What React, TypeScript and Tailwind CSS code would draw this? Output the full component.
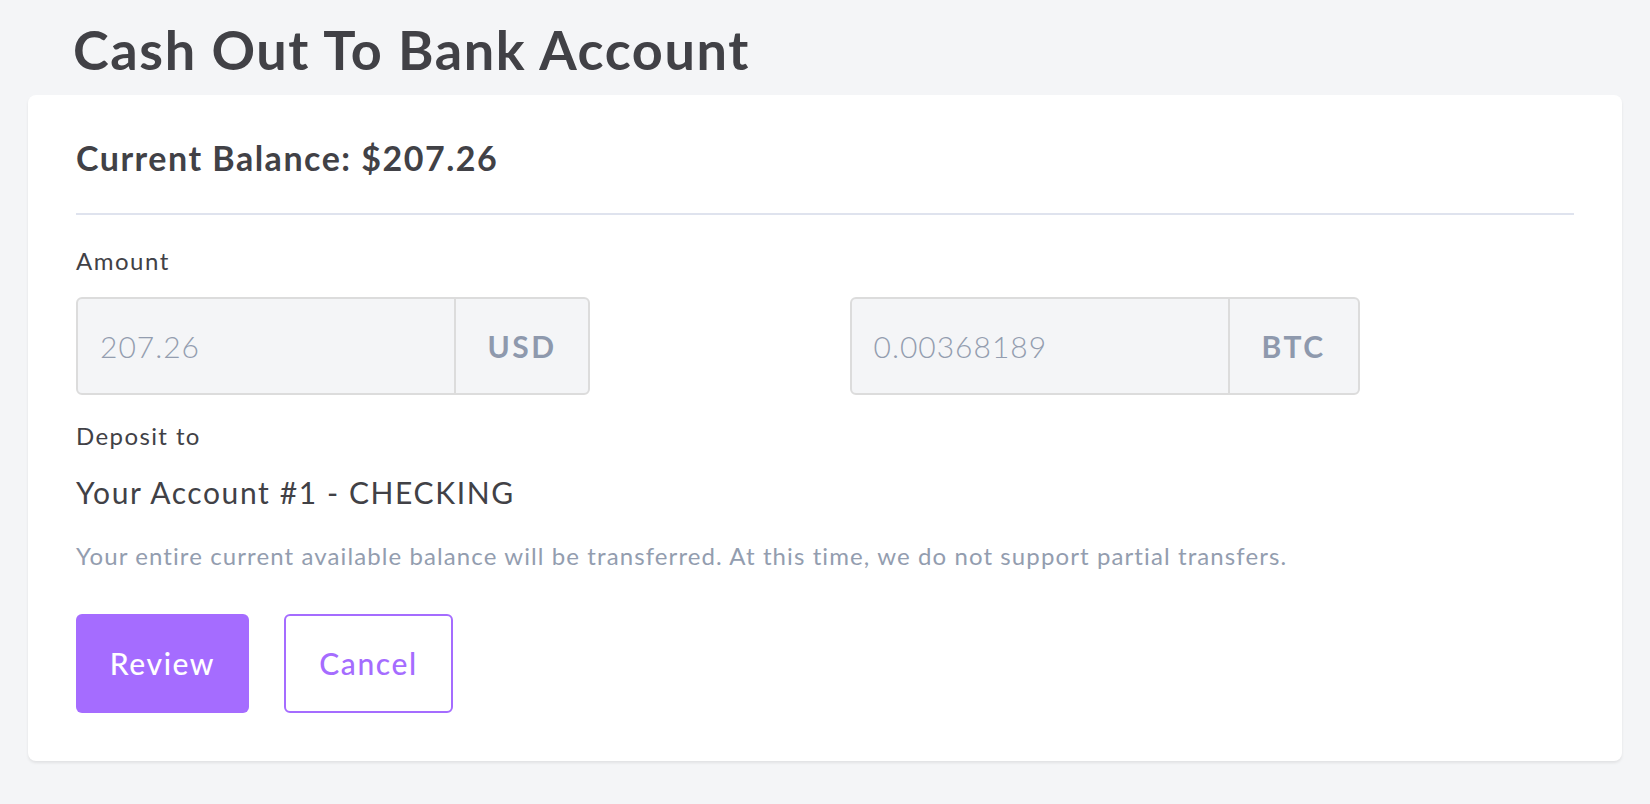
export default function App() {
  return (
    <div className="min-h-[804px] bg-[#f4f5f7] font-['Lato',sans-serif] text-[#414146]">
      <div className="pl-[28px] pr-[28px] pt-[23px]">
        <h1 className="pl-[45px] text-[54px] font-bold leading-none tracking-[1.6px]">
          Cash Out To Bank Account
        </h1>
        <div className="mt-[18px] rounded-lg bg-white px-12 pb-12 pt-[46px] shadow-[0_2px_3px_rgba(0,0,0,0.08)]">
          <h2 className="text-[34px] font-bold leading-none tracking-[1.5px]">Current Balance: $207.26</h2>
          <div className="mt-[38px] h-[2px] bg-[#dfe3ee]" />

          <div className="mt-[34px] text-[24px] leading-none tracking-[1.5px]">Amount</div>
          <div className="mt-[24px] grid grid-cols-2 gap-[49px]">
            <AmountInput value="207.26" unit="USD" width="w-[514px]" />
            <AmountInput value="0.00368189" unit="BTC" width="w-[510px]" />
          </div>

          <div className="mt-[29px] text-[24px] leading-none tracking-[1.4px]">Deposit to</div>
          <div className="mt-[29px] text-[30px] leading-none tracking-[1.6px]">Your Account #1 - CHECKING</div>

          <p className="mt-[37px] text-[24px] leading-none tracking-[1.1px] text-[#939daf]">
            Your entire current available balance will be transferred. At this time, we do not support partial transfers.
          </p>

          <div className="mt-[46px] flex gap-[35px]">
            <button className="h-[99px] w-[173px] rounded-md bg-[#a56cff] text-[30px] font-medium tracking-[1.6px] text-white">
              Review
            </button>
            <button className="h-[99px] w-[169px] rounded-md border-2 border-[#a56cff] bg-white text-[30px] font-medium tracking-[1.6px] text-[#a56cff]">
              Cancel
            </button>
          </div>
        </div>
      </div>
    </div>
  );
}

function AmountInput({ value, unit, width }: { value: string; unit: string; width: string }) {
  return (
    <div className={`flex h-[98px] overflow-hidden rounded-md border-2 border-[#dcdcdc] bg-[#f4f5f7] ${width}`}>
      <div className="flex w-[378px] items-center border-r-2 border-[#dcdcdc] pl-[22px] text-[30px] font-light tracking-[1px] text-[#939daf]">
        {value}
      </div>
      <div className="flex flex-1 items-center justify-center text-[30px] font-bold tracking-[2.5px] text-[#8e99ad]">
        {unit}
      </div>
    </div>
  );
}
